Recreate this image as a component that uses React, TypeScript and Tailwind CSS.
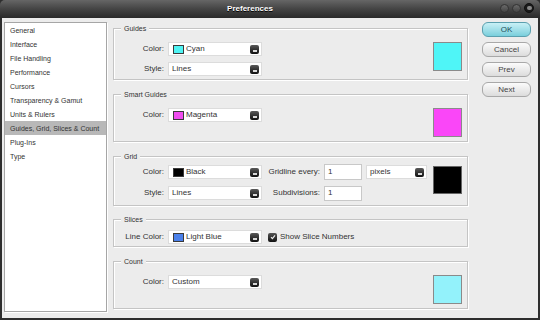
const font = { fontFamily: '"Liberation Sans", Arial, sans-serif' };

const categories = [
  'General',
  'Interface',
  'File Handling',
  'Performance',
  'Cursors',
  'Transparency & Gamut',
  'Units & Rulers',
  'Guides, Grid, Slices & Count',
  'Plug-Ins',
  'Type',
];

function Arrow() {
  return (
    <span className="flex h-[9px] w-[9px] shrink-0 items-end justify-center rounded-[2px] bg-gradient-to-b from-[#5a5a5a] to-[#111] pb-[2px]">
      <span className="h-[2px] w-[4px] bg-[#d8d8d8]" />
    </span>
  );
}

function Select({ text, swatch, w = 'w-[94px]' }: { text: string; swatch?: string; w?: string }) {
  return (
    <div className={`flex h-[14px] ${w} items-center border border-[#dcdcdc] bg-white pl-[3px] pr-[2px]`}>
      {swatch && <span className={`mr-[2px] ml-[1px] h-[9px] w-[11px] border border-[#3a3a3a] ${swatch}`} />}
      <span className="flex-1 text-[8px] leading-none text-[#333]">{text}</span>
      <Arrow />
    </div>
  );
}

function Label({ children, w = 'w-[54px]' }: { children: string; w?: string }) {
  return <span className={`${w} shrink-0 pr-[4px] text-right text-[8px] leading-none text-[#333]`}>{children}</span>;
}

function Group({ title, className, children }: { title: string; className: string; children: React.ReactNode }) {
  return (
    <div className={`relative border border-[#c4c4c4] shadow-[inset_1px_1px_0_#fff,1px_1px_0_#fff] ${className}`}>
      <span className="absolute -top-[5px] left-[7px] bg-[#ececec] px-[3px] text-[7px] leading-[9px] text-[#333]">{title}</span>
      {children}
    </div>
  );
}

function Swatch({ color }: { color: string }) {
  return <div className={`ml-auto mr-[5px] h-[29px] w-[29px] border border-[#8a8a8a] ${color}`} />;
}

function Button({ children, primary }: { children: string; primary?: boolean }) {
  return (
    <div
      className={`flex h-[15px] w-[49px] items-center justify-center rounded-[6px] border text-[8px] leading-none ${
        primary
          ? 'border-[#5a9fae] bg-gradient-to-b from-[#c8f0f6] to-[#79cfdc] text-[#1d4d57]'
          : 'border-[#a8a8a8] bg-gradient-to-b from-[#fbfbfb] to-[#dcdcdc] text-[#444]'
      }`}
    >
      {children}
    </div>
  );
}

export default function App() {
  return (
    <div className="flex h-[320px] w-[540px] flex-col overflow-hidden bg-[#2e2e2e]" style={font}>
      <div className="relative flex h-[18px] shrink-0 items-center justify-center rounded-t-[5px] bg-gradient-to-b from-[#666] via-[#444] to-[#2a2a2a] pr-[40px]">
        <span className="text-[8px] font-bold text-white [text-shadow:0_1px_0_#000]">Preferences</span>
        <div className="absolute right-[6px] top-[3px] flex items-center gap-[3px]">
          <span className="h-[9px] w-[9px] rounded-full border border-[#333] bg-gradient-to-b from-[#6a6a6a] to-[#444]" />
          <span className="h-[9px] w-[9px] rounded-full border border-[#333] bg-gradient-to-b from-[#6a6a6a] to-[#444]" />
          <span className="flex h-[10px] w-[10px] items-center justify-center rounded-full border border-[#111] bg-[#1a1a1a]">
            <span className="h-[4px] w-[5px] rounded-full bg-[#888]" />
          </span>
        </div>
      </div>

      <div className="mx-[2px] mb-[2px] flex flex-1 bg-[#ececec] pt-[4px] pl-[2px] pb-[6px]">
        <div className="w-[103px] shrink-0 border border-[#a6a6a6] bg-white shadow-[1px_1px_0_#fff]">
          {categories.map((c) => (
            <div
              key={c}
              className={`flex h-[14px] items-center pl-[5px] text-[7px] leading-none text-[#333] ${
                c.startsWith('Guides') ? 'bg-[#b8b8b8]' : ''
              }`}
            >
              {c}
            </div>
          ))}
        </div>

        <div className="ml-[6px] flex w-[355px] shrink-0 flex-col pt-[6px]">
          <Group title="Guides" className="flex h-[52px] items-start pt-[13px]">
            <div className="flex flex-col gap-[6px]">
              <div className="flex items-center">
                <Label>Color:</Label>
                <Select text="Cyan" swatch="bg-[#4ff4f4]" />
              </div>
              <div className="flex items-center">
                <Label>Style:</Label>
                <Select text="Lines" />
              </div>
            </div>
            <Swatch color="bg-[#4ff5f7]" />
          </Group>

          <Group title="Smart Guides" className="mt-[14px] flex h-[48px] items-start pt-[13px]">
            <div className="flex items-center">
              <Label>Color:</Label>
              <Select text="Magenta" swatch="bg-[#f04df0]" />
            </div>
            <Swatch color="bg-[#fa46f8]" />
          </Group>

          <Group title="Grid" className="mt-[14px] flex h-[50px] items-start pt-[7px]">
            <div className="flex flex-col gap-[5px]">
              <div className="flex h-[16px] items-center">
                <Label>Color:</Label>
                <Select text="Black" swatch="bg-black" />
                <Label w="w-[62px]">Gridline every:</Label>
                <div className="flex h-[16px] w-[38px] items-center border border-[#c8c8c8] bg-white pl-[3px] text-[8px] leading-none text-[#333]">1</div>
                <div className="ml-[4px]">
                  <Select text="pixels" w="w-[61px]" />
                </div>
              </div>
              <div className="flex h-[16px] items-center">
                <Label>Style:</Label>
                <Select text="Lines" />
                <Label w="w-[62px]">Subdivisions:</Label>
                <div className="flex h-[15px] w-[38px] items-center border border-[#c8c8c8] bg-white pl-[3px] text-[8px] leading-none text-[#333]">1</div>
              </div>
            </div>
            <div className="ml-auto mr-[5px] mt-[2px] h-[28px] w-[29px] border border-[#666] bg-black" />
          </Group>

          <Group title="Slices" className="mt-[13px] flex h-[28px] items-start pt-[10px]">
            <div className="flex items-center">
              <Label>Line Color:</Label>
              <Select text="Light Blue" swatch="bg-[#4a80ea]" />
              <span className="ml-[6px] flex h-[9px] w-[9px] items-center justify-center rounded-[2px] bg-gradient-to-b from-[#555] to-[#111]">
                <svg width="6" height="6" viewBox="0 0 6 6">
                  <path d="M1 3.2 L2.4 4.6 L5 1.4" stroke="#eee" strokeWidth="1.2" fill="none" />
                </svg>
              </span>
              <span className="ml-[3px] text-[8px] leading-none text-[#333]">Show Slice Numbers</span>
            </div>
          </Group>

          <Group title="Count" className="mt-[14px] flex h-[48px] items-start pt-[13px]">
            <div className="flex items-center">
              <Label>Color:</Label>
              <Select text="Custom" />
            </div>
            <Swatch color="bg-[#93f2fb]" />
          </Group>
        </div>

        <div className="ml-[14px] flex flex-col gap-[5px]">
          <Button primary>OK</Button>
          <Button>Cancel</Button>
          <Button>Prev</Button>
          <Button>Next</Button>
        </div>
      </div>
    </div>
  );
}
